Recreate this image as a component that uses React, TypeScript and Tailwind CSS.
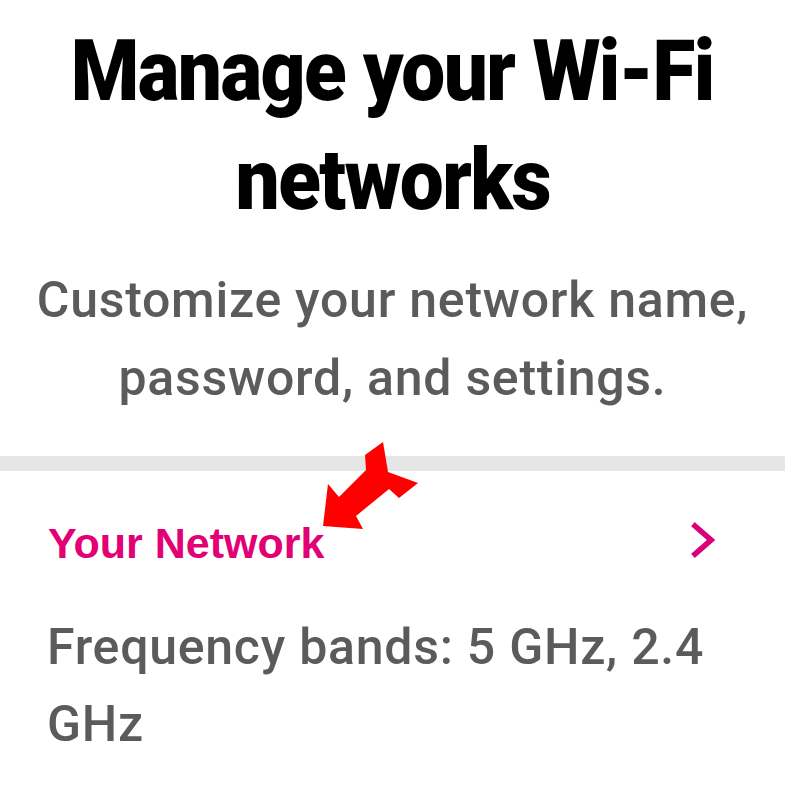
export default function App() {
  return (
    <div className="relative w-[785px] h-[785px] overflow-hidden bg-white">
      <h1 className="pt-[16px] text-center font-['Roboto',sans-serif] font-black text-[86px] leading-[109px] text-black tracking-[-0.02em]">
        <span className="inline-block scale-x-[0.91]">Manage your Wi-Fi</span>
        <br />
        <span className="inline-block scale-x-[0.91]">networks</span>
      </h1>

      <p className="mt-[27px] text-center font-['Roboto',sans-serif] font-medium text-[50px] leading-[78px] tracking-[0.015em] text-[#5b5b5b]">
        Customize your network name,
        <br />
        password, and settings.
      </p>

      <div className="mt-[39px] h-[15px] bg-[#e6e6e6]" />

      <div className="mt-[47px] flex items-center justify-between pl-[48px] pr-[70px]">
        <span className="font-['Liberation_Sans',Arial,sans-serif] font-bold text-[43px] leading-[50px] text-[#e20074]">
          Your Network
        </span>
        <svg width="24" height="36" viewBox="0 0 24 36" className="-mt-[6px]">
          <polyline
            points="4,4 20,18 4,32"
            fill="none"
            stroke="#d9007a"
            strokeWidth="5.5"
            strokeLinecap="square"
            strokeLinejoin="miter"
          />
        </svg>
      </div>

      <p className="mt-[41px] pl-[47px] pr-[50px] font-['Roboto',sans-serif] font-medium text-[50px] leading-[77px] tracking-[0.015em] text-[#5b5b5b]">
        Frequency bands: 5 GHz, 2.4 GHz
      </p>

      {/* red annotation arrow */}
      <svg
        className="absolute left-0 top-0 pointer-events-none"
        width="785"
        height="785"
        viewBox="0 0 785 785"
      >
        <polygon
          points="323,526 328,484 339,497 366,470 365,455 383,442 388,472 418,483 399,498 389,489 356,516 363,529"
          fill="#ff0000"
        />
      </svg>
    </div>
  );
}
